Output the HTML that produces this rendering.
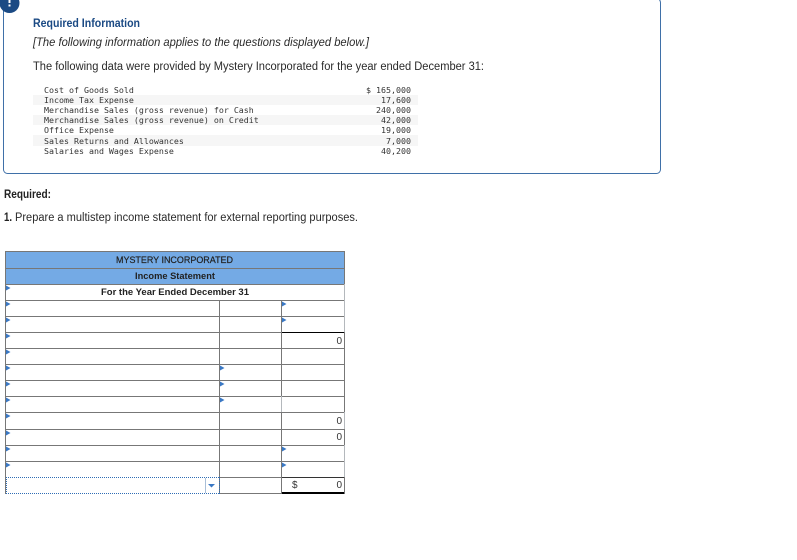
<!DOCTYPE html>
<html><head><meta charset="utf-8"><style>
html,body{margin:0;padding:0;width:797px;height:560px;background:#fff;overflow:hidden}
svg{position:absolute;left:0;top:0}
text{font-family:"Liberation Sans",sans-serif;white-space:pre}
.m{font-family:"DejaVu Sans Mono",monospace;font-size:8.3px;fill:#333}
.b{font-size:11.5px;fill:#2a2a2a}
.t{font-size:9px;font-weight:bold;fill:#222}
.n{font-size:10px;fill:#333}
</style></head><body>
<svg width="797" height="560" viewBox="0 0 797 560" shape-rendering="crispEdges">
<!-- info box -->
<rect x="3.5" y="-1.500" width="657" height="175" rx="4" fill="#fff" stroke="#3f70a8" stroke-width="1" shape-rendering="auto"/>
<circle cx="9.5" cy="3" r="10" fill="#1b4a84" shape-rendering="auto"/>
<rect x="8.5" y="0" width="2" height="3" fill="#fff"/>
<rect x="8.5" y="4.500" width="2" height="2" fill="#fff"/>
<text x="33" y="27" textLength="107" lengthAdjust="spacingAndGlyphs" style="font-size:11.5px;font-weight:bold;fill:#1b4a84">Required Information</text>
<text x="33" y="46" textLength="336" lengthAdjust="spacingAndGlyphs" class="b" font-style="italic">[The following information applies to the questions displayed below.]</text>
<text x="33" y="70" textLength="451" lengthAdjust="spacingAndGlyphs" class="b">The following data were provided by Mystery Incorporated for the year ended December 31:</text>
<!-- stripes -->
<rect x="33" y="95" width="385" height="10" fill="#f6f6f6"/>
<rect x="33" y="115" width="385" height="10" fill="#f6f6f6"/>
<rect x="33" y="135" width="385" height="11" fill="#f6f6f6"/>
<text class="m" x="44" y="93">Cost of Goods Sold</text>
<text class="m" x="44" y="103">Income Tax Expense</text>
<text class="m" x="44" y="113">Merchandise Sales (gross revenue) for Cash</text>
<text class="m" x="44" y="123">Merchandise Sales (gross revenue) on Credit</text>
<text class="m" x="44" y="133">Office Expense</text>
<text class="m" x="44" y="144">Sales Returns and Allowances</text>
<text class="m" x="44" y="154">Salaries and Wages Expense</text>
<g text-anchor="end">
<text class="m" x="411" y="93">$ 165,000</text>
<text class="m" x="411" y="103">17,600</text>
<text class="m" x="411" y="113">240,000</text>
<text class="m" x="411" y="123">42,000</text>
<text class="m" x="411" y="133">19,000</text>
<text class="m" x="411" y="144">7,000</text>
<text class="m" x="411" y="154">40,200</text>
</g>
<text x="4" y="198" textLength="47" lengthAdjust="spacingAndGlyphs" style="font-size:11.5px;font-weight:bold;fill:#222">Required:</text>
<text x="4" y="221" textLength="8" lengthAdjust="spacingAndGlyphs" style="font-size:11.5px;font-weight:bold;fill:#222">1.</text>
<text x="15" y="221" textLength="343" lengthAdjust="spacingAndGlyphs" class="b">Prepare a multistep income statement for external reporting purposes.</text>
<!-- table header -->
<rect x="5" y="251" width="339" height="33" fill="#74aae5"/>
<text class="t" x="116" y="263" textLength="117" lengthAdjust="spacingAndGlyphs" style="font-weight:normal;stroke:#222;stroke-width:.2px">MYSTERY INCORPORATED</text>
<text class="t" x="135" y="279" textLength="80" lengthAdjust="spacingAndGlyphs">Income Statement</text>
<text class="t" x="101" y="295" textLength="148" lengthAdjust="spacingAndGlyphs">For the Year Ended December 31</text>
<!-- lines -->
<g fill="#777">
<rect x="5" y="251" width="340" height="1"/>
<rect x="5" y="268" width="340" height="1"/>
<rect x="5" y="284" width="340" height="1"/>
<rect x="5" y="300" width="340" height="1"/>
<rect x="5" y="316" width="340" height="1"/>
<rect x="5" y="332" width="340" height="1"/>
<rect x="5" y="348" width="340" height="1"/>
<rect x="5" y="364" width="340" height="1"/>
<rect x="5" y="380" width="340" height="1"/>
<rect x="5" y="396" width="340" height="1"/>
<rect x="5" y="412" width="340" height="1"/>
<rect x="5" y="429" width="340" height="1"/>
<rect x="5" y="445" width="340" height="1"/>
<rect x="5" y="461" width="340" height="1"/>
<rect x="5" y="477" width="340" height="1"/>
<rect x="5" y="493" width="277" height="1"/>
<rect x="5" y="251" width="1" height="243"/>
<rect x="219" y="300" width="1" height="194"/>
<rect x="281" y="300" width="1" height="194"/>
<rect x="344" y="251" width="1" height="243"/>
</g>
<g fill="#b4b8bc">
<rect x="344" y="284" width="1" height="48"/>
<rect x="344" y="412" width="1" height="17"/>
<rect x="344" y="445" width="1" height="32"/>
<rect x="281" y="396" width="1" height="16"/>
</g>
<rect x="282" y="332" width="62" height="1" fill="#000"/>
<rect x="282" y="477" width="62" height="1" fill="#333"/>
<rect x="282" y="492" width="62" height="2" fill="#000"/>
<!-- dropdown cell -->
<rect x="6" y="477" width="213" height="17" fill="#fff"/>
<g fill="none" stroke="#2f6db5" stroke-width="1" stroke-dasharray="1 1">
<path d="M6 477.500H219M6 493.500H219M6.500 477V494M219.500 477V494"/>
</g>
<rect x="205" y="478" width="1" height="15" fill="#a9bfd8"/>
<path d="M208 484h7l-3.500 3.500z" fill="#3a78c4" shape-rendering="auto"/>
<!-- triangles -->
<g fill="#3a78c4" shape-rendering="auto">
<path d="M6 285.500l4.500 2.500-4.500 2.500z"/><path d="M6 301.500l4.500 2.500-4.500 2.500z"/><path d="M6 317.500l4.500 2.500-4.500 2.500z"/>
<path d="M6 333.500l4.500 2.500-4.500 2.500z"/><path d="M6 349.500l4.500 2.500-4.500 2.500z"/><path d="M6 365.500l4.500 2.500-4.500 2.500z"/>
<path d="M6 381.500l4.500 2.500-4.500 2.500z"/><path d="M6 397.500l4.500 2.500-4.500 2.500z"/><path d="M6 413.500l4.500 2.500-4.500 2.500z"/>
<path d="M6 430.500l4.500 2.500-4.500 2.500z"/><path d="M6 446.500l4.500 2.500-4.500 2.500z"/><path d="M6 462.500l4.500 2.500-4.500 2.500z"/>
<path d="M220 365.500l4.500 2.500-4.500 2.500z"/><path d="M220 381.500l4.500 2.500-4.500 2.500z"/><path d="M220 397.500l4.500 2.500-4.500 2.500z"/>
<path d="M282 301.500l4.500 2.500-4.500 2.500z"/><path d="M282 317.500l4.500 2.500-4.500 2.500z"/><path d="M282 446.500l4.500 2.500-4.500 2.500z"/><path d="M282 462.500l4.500 2.500-4.500 2.500z"/>
</g>
<!-- values -->
<g text-anchor="end">
<text class="n" x="342" y="344">0</text>
<text class="n" x="342" y="424">0</text>
<text class="n" x="342" y="440">0</text>
<text class="n" x="342" y="488">0</text>
</g>
<text class="n" x="292" y="488">$</text>
</svg>
</body></html>
